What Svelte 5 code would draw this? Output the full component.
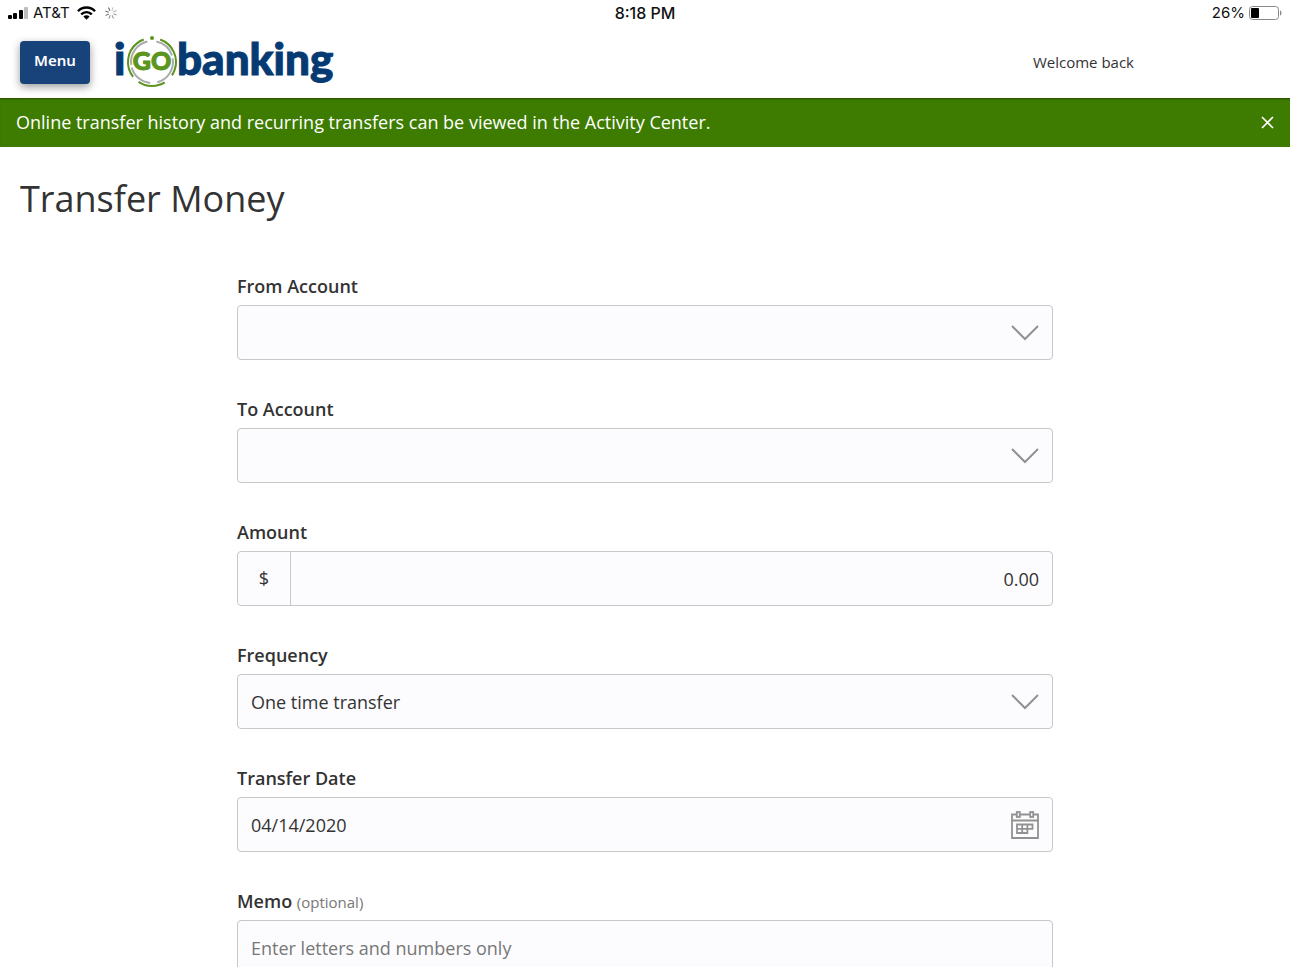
<script lang="ts">
	let showNotice = $state(true);
	let fromAccount = $state('');
	let toAccount = $state('');
	let amount = $state('0.00');
	let frequency = $state('once');
	let transferDate = $state('04/14/2020');
	let memo = $state('');

	// spinner spokes, darkest last
	const spokes = [0, 1, 2, 3, 4, 5, 6, 7];

	// rings of the logo, in degrees clockwise from 3 o'clock
	const arcs = [
		{ r: 24, start: 142, sweep: 108, color: '#5c9420' },
		{ r: 24, start: 58, sweep: 66, color: '#5c9420' },
		{ r: 24, start: 290, sweep: 104, color: '#5c9420' },
		{ r: 21, start: 95, sweep: 70, color: '#a9abad' },
		{ r: 21, start: 172, sweep: 85, color: '#a9abad' },
		{ r: 21, start: 282, sweep: 60, color: '#a9abad' },
		{ r: 21, start: 350, sweep: 85, color: '#a9abad' }
	];
</script>

{#snippet chevron()}
	<svg class="field-icon" width="30" height="18" viewBox="0 0 30 18" aria-hidden="true">
		<path d="M2 2 L15 15 L28 2" fill="none" stroke="#929292" stroke-width="2" />
	</svg>
{/snippet}

<div class="status">
	<div class="status-side">
		<svg width="20" height="12" viewBox="0 0 20 12" aria-hidden="true">
			<rect x="0" y="8" width="4" height="4" rx="1" />
			<rect x="5" y="6" width="4" height="6" rx="1" />
			<rect x="11" y="3" width="4" height="9" rx="1" />
			<rect x="16" y="0" width="4" height="12" rx="1" fill="#bdbdbd" />
		</svg>
		<span>AT&amp;T</span>
		<svg class="wifi" width="19" height="14" viewBox="0 0 19 14" aria-hidden="true">
			<g fill="none" stroke="#000" stroke-width="2.4">
				<path d="M1 5.2 C5.6 0.3 13.4 0.3 18 5.2" />
				<path d="M4.2 8.4 C7.2 5.3 11.8 5.3 14.8 8.4" />
			</g>
			<path d="M6.4 10.6 C8.2 8.9 10.8 8.9 12.6 10.6 L9.5 13.7 Z" />
		</svg>
		<svg class="spinner" width="12" height="12" viewBox="0 0 12 12" aria-hidden="true">
			{#each spokes as n}
				<path d="M6 0 V3.6" stroke="#444" stroke-width="1" opacity={0.35 + n * 0.07} transform="rotate({n * 45 + 20} 6 6)" />
			{/each}
		</svg>
	</div>
	<div class="clock">8:18 PM</div>
	<div class="status-side right">
		<span>26%</span>
		<svg width="33" height="14" viewBox="0 0 33 14" aria-hidden="true">
			<rect x="0.5" y="0.5" width="29" height="13" rx="3" fill="none" stroke="#888" />
			<rect x="2" y="2" width="8" height="10" rx="1" />
			<path d="M31 4.5 C33 5 33 9 31 9.5 Z" fill="#888" />
		</svg>
	</div>
</div>

<header>
	<button class="menu">Menu</button>
	<svg class="logo" width="226" height="68" viewBox="0 -6 226 68" role="img" aria-label="iGObanking">
		<text class="word" x="1" y="41">i</text>
		{#each arcs as arc}
			<circle
				cx="39"
				cy="28"
				r={arc.r}
				fill="none"
				stroke={arc.color}
				stroke-width="2"
				pathLength="360"
				stroke-dasharray="{arc.sweep} {360 - arc.sweep}"
				transform="rotate({arc.start} 39 28)"
			/>
		{/each}
		<circle cx="39" cy="4" r="2" fill="#5c9420" />
		<text class="go" x="39" y="36" text-anchor="middle">GO</text>
		<text class="word" x="64" y="41">banking</text>
	</svg>
	<div class="welcome">Welcome back</div>
</header>

{#if showNotice}
	<div class="notice" role="status">
		<span>Online transfer history and recurring transfers can be viewed in the Activity Center.</span>
		<button class="dismiss" aria-label="Dismiss" onclick={() => (showNotice = false)}>
			<svg width="13" height="13" viewBox="0 0 13 13" aria-hidden="true">
				<path d="M1 1 L12 12 M12 1 L1 12" stroke="#fff" stroke-width="1.6" />
			</svg>
		</button>
	</div>
{/if}

<main>
	<h1>Transfer Money</h1>

	<form>
		<div class="field">
			<label for="from">From Account</label>
			<div class="box">
				<select id="from" bind:value={fromAccount}>
					<option value=""></option>
				</select>
				{@render chevron()}
			</div>
		</div>

		<div class="field">
			<label for="to">To Account</label>
			<div class="box">
				<select id="to" bind:value={toAccount}>
					<option value=""></option>
				</select>
				{@render chevron()}
			</div>
		</div>

		<div class="field">
			<label for="amount">Amount</label>
			<div class="box">
				<span class="currency">$</span>
				<input id="amount" class="amount" type="text" inputmode="decimal" bind:value={amount} />
			</div>
		</div>

		<div class="field">
			<label for="frequency">Frequency</label>
			<div class="box">
				<select id="frequency" bind:value={frequency}>
					<option value="once">One time transfer</option>
				</select>
				{@render chevron()}
			</div>
		</div>

		<div class="field">
			<label for="date">Transfer Date</label>
			<div class="box">
				<input id="date" type="text" bind:value={transferDate} />
				<svg class="field-icon" width="30" height="30" viewBox="0 0 30 30" aria-hidden="true">
					<g fill="none" stroke="#929292" stroke-width="1.8">
						<path d="M6.5 4.5 H2 V28 H28 V4.5 H23.5 M10 4.5 H20 M2 10.5 H28" />
						<rect x="6.8" y="2" width="3" height="5" />
						<rect x="20.2" y="2" width="3" height="5" />
						<path d="M7 14.5 H22.5 V18.8 H7 Z M7 18.8 V23 H17.4 V14.5 M12.2 14.5 V23" />
					</g>
				</svg>
			</div>
		</div>

		<div class="field">
			<label for="memo">Memo <span class="optional">(optional)</span></label>
			<div class="box">
				<input id="memo" type="text" placeholder="Enter letters and numbers only" bind:value={memo} />
			</div>
		</div>
	</form>
</main>

<style>
	:global(body) {
		margin: 0;
		background: #fff;
		color: #333;
		font-family: 'Open Sans', 'Noto Sans', sans-serif;
	}

	.status {
		display: flex;
		align-items: center;
		height: 26px;
		padding: 0 8px;
		color: #111;
		font: 15px/26px Inter, 'Liberation Sans', sans-serif;
	}

	.status-side {
		display: flex;
		flex: 1;
		align-items: center;
		gap: 5px;
	}

	.status-side.right {
		justify-content: flex-end;
		gap: 4px;
	}

	.wifi {
		margin: 0 4px 0 2px;
	}

	.clock {
		font-size: 16px;
		font-weight: 500;
	}

	header {
		display: flex;
		align-items: center;
		box-sizing: border-box;
		height: 72px;
		padding: 0 156px 0 20px;
	}

	.menu {
		width: 70px;
		height: 43px;
		padding: 0 0 4px;
		border: 0;
		border-radius: 4px;
		background: #17427a;
		box-shadow: 0 3px 8px rgba(0, 0, 0, 0.4);
		color: #fff;
		font: 600 15px/20px 'Noto Sans', 'Open Sans', sans-serif;
		cursor: pointer;
	}

	.logo {
		margin-left: 23px;
	}

	.word {
		fill: #063a73;
		stroke: #063a73;
		stroke-width: 1;
		font: 900 44px Lato, sans-serif;
	}

	.go {
		fill: #5c9420;
		stroke: #5c9420;
		stroke-width: 1;
		font: 900 25px Lato, sans-serif;
	}

	.welcome {
		margin-left: auto;
		font-size: 15px;
		line-height: 20px;
	}

	.notice {
		display: flex;
		align-items: center;
		justify-content: space-between;
		box-sizing: border-box;
		min-height: 49px;
		padding: 0 16px 1px;
		background: #3d7c00;
		box-shadow: inset 0 2px 2px -1px rgba(0, 0, 0, 0.4);
		color: #fff;
		font-size: 18px;
		line-height: 24px;
	}

	.dismiss {
		display: flex;
		padding: 8px;
		margin-right: -8px;
		border: 0;
		background: none;
		cursor: pointer;
	}

	h1 {
		margin: 0;
		padding: 25px 20px 0;
		font-size: 36px;
		font-weight: 400;
		line-height: 54px;
	}

	form {
		display: flex;
		flex-direction: column;
		gap: 37px;
		max-width: 816px;
		margin: 48px auto;
	}

	label {
		display: block;
		margin-bottom: 7px;
		font-size: 18px;
		font-weight: 600;
		line-height: 24px;
	}

	.optional {
		color: #777;
		font-size: 15px;
		font-weight: 400;
		line-height: 16px;
	}

	.box {
		display: flex;
		position: relative;
		box-sizing: border-box;
		height: 55px;
		border: 1px solid #c8c8c8;
		border-radius: 4px;
		background: #fcfcfe;
	}

	.currency {
		width: 52px;
		border-right: 1px solid #c8c8c8;
		font-size: 18px;
		line-height: 53px;
		text-align: center;
	}

	select,
	input {
		flex: 1;
		min-width: 0;
		padding: 0 13px;
		border: 0;
		border-radius: 4px;
		background: transparent;
		color: #333;
		font: 18px/24px 'Open Sans', 'Noto Sans', sans-serif;
		appearance: none;
	}

	input::placeholder {
		color: #777;
		opacity: 1;
	}

	.amount {
		text-align: right;
	}

	.field-icon {
		position: absolute;
		top: 0;
		right: 12px;
		bottom: 0;
		margin: auto 0;
		pointer-events: none;
	}
</style>
